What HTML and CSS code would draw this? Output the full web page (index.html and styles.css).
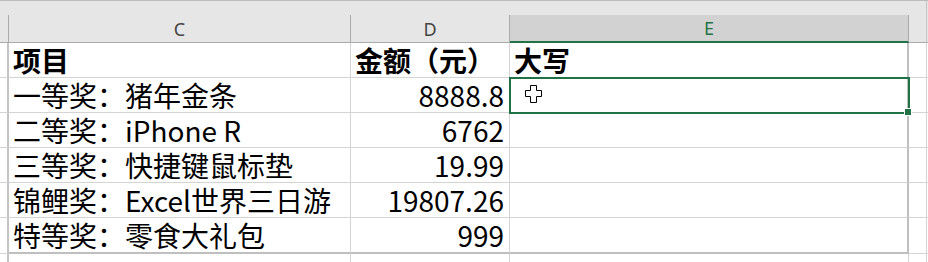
FILE: index.html
```html
<!DOCTYPE html>
<html lang="zh-CN">
<head>
    <meta charset="UTF-8">
    <title>奖品清单</title>
    <link rel="stylesheet" href="styles.css">
</head>
<body>
    <div class="sheet">
        <div class="strip"><div class="strip-main"></div></div>
        <div class="grid">
            <div class="hd stub"></div>
            <div class="hd">C</div>
            <div class="hd">D</div>
            <div class="hd hd-sel">E</div>
            <div class="hd hd-f"></div>
            <div class="hd hd-rest"></div>

            <div class="stub"></div>
            <div class="cell bold">项目</div>
            <div class="cell bold">金额（元）</div>
            <div class="cell col-e bold">大写</div>
            <div class="cell col-f"></div>
            <div class="rest"></div>

            <div class="stub"></div>
            <div class="cell">一等奖：猪年金条</div>
            <div class="cell num">8888.8</div>
            <div class="cell col-e active">
                <div class="selection"><span class="handle"></span></div>
                <svg class="cursor" width="18" height="18" viewBox="0 0 18 18">
                    <path d="M5.5 0.5h6v5h5v6h-5v6h-6v-6h-5v-6h5z" fill="#fff" stroke="#000" stroke-width="1"/>
                </svg>
            </div>
            <div class="cell col-f"></div>
            <div class="rest"></div>

            <div class="stub"></div>
            <div class="cell">二等奖：iPhone R</div>
            <div class="cell num">6762</div>
            <div class="cell col-e"></div>
            <div class="cell col-f"></div>
            <div class="rest"></div>

            <div class="stub"></div>
            <div class="cell">三等奖：快捷键鼠标垫</div>
            <div class="cell num">19.99</div>
            <div class="cell col-e"></div>
            <div class="cell col-f"></div>
            <div class="rest"></div>

            <div class="stub"></div>
            <div class="cell">锦鲤奖：Excel世界三日游</div>
            <div class="cell num">19807.26</div>
            <div class="cell col-e"></div>
            <div class="cell col-f"></div>
            <div class="rest"></div>

            <div class="stub"></div>
            <div class="cell last">特等奖：零食大礼包</div>
            <div class="cell num last">999</div>
            <div class="cell col-e last"></div>
            <div class="cell col-f"></div>
            <div class="rest"></div>

            <div class="stub"></div>
            <div class="cell"></div>
            <div class="cell"></div>
            <div class="cell col-e-soft"></div>
            <div class="cell col-f"></div>
            <div class="rest"></div>
        </div>
    </div>
</body>
</html>
```

FILE: styles.css
```css
* {
    box-sizing: border-box;
}

body {
    margin: 0;
    background-color: #ffffff;
    overflow: hidden;
}

.sheet {
    width: 928px;
    height: 262px;
    overflow: hidden;
}

.strip {
    height: 15px;
    background-color: #e6e6e6;
    border-top: 1px solid #bcbcbc;
}

.strip-main {
    width: 927px;
    height: 100%;
    border-right: 1px solid #c6c6c6;
}

.grid {
    display: grid;
    grid-template-columns: 9px 342px 159px 399px 18px 1fr;
    grid-template-rows: 28px repeat(5, 35px) 36px 35px;
}

.hd {
    background-color: #e6e6e6;
    border-right: 1px solid #ababab;
    border-bottom: 1px solid #ababab;
    font-family: "Noto Sans", sans-serif;
    font-size: 18px;
    color: #444444;
    display: flex;
    align-items: center;
    justify-content: center;
}

.hd-sel {
    background-color: #d2d2d2;
    color: #217346;
    border-bottom: 2px solid #217346;
}

.hd-f {
    border-right: 1px solid #c6c6c6;
}

.hd-rest {
    border-right: none;
}

.stub {
    border-right: 2px solid #c4c4c4;
    border-bottom: 1px solid #d4d4d4;
}

.hd.stub {
    border-right: 1px solid #ababab;
    border-bottom: 1px solid #ababab;
}

.cell {
    border-right: 1px solid #d4d4d4;
    border-bottom: 1px solid #d4d4d4;
    padding: 0 4px;
    display: flex;
    align-items: flex-end;
    font-family: "Noto Sans CJK SC", sans-serif;
    font-size: 28px;
    line-height: 34px;
    color: #000000;
    white-space: nowrap;
}

.bold {
    font-weight: 700;
}

.num {
    justify-content: flex-end;
    padding-right: 5px;
}

.col-e {
    border-right: 2px solid #bfbfbf;
}

.col-e-soft {
    border-right: 1px solid #d4d4d4;
}

.col-f {
    border-right: 1px solid #d4d4d4;
}

.last {
    border-bottom: 2px solid #bfbfbf;
}

.rest {
    border-bottom: 1px solid #d4d4d4;
}

.active {
    position: relative;
}

.selection {
    position: absolute;
    left: -1px;
    top: -1px;
    width: 401px;
    height: 37px;
    border: 2px solid #217346;
}

.handle {
    position: absolute;
    right: -4px;
    bottom: -4px;
    width: 8px;
    height: 8px;
    background-color: #217346;
    border: 1px solid #ffffff;
}

.cursor {
    position: absolute;
    left: 15px;
    top: 7px;
}
```
